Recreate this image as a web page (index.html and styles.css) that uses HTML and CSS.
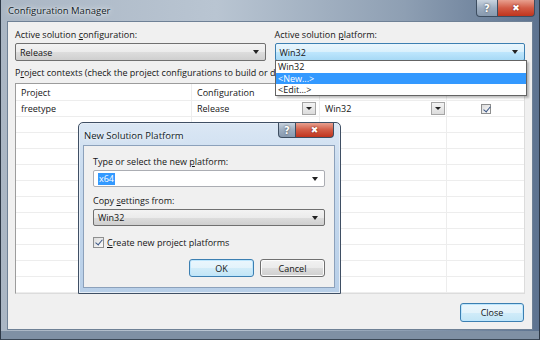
FILE: index.html
```html
<!DOCTYPE html>
<html>
<head>
<meta charset="utf-8">
<link rel="stylesheet" href="styles.css">
</head>
<body>
<div class="win">
  <div class="titlebar">
    <span class="title">Configuration Manager</span>
    <div class="capbtns">
      <span class="cap help">?</span>
      <span class="cap close">&#x2716;</span>
    </div>
  </div>
  <div class="client">
    <div class="toprow">
      <div class="field">
        <div class="lbl">Active solution <u>c</u>onfiguration:</div>
        <div class="combo gray"><span>Release</span><span class="arrow"></span></div>
      </div>
      <div class="field">
        <div class="lbl">Active solution <u>p</u>latform:</div>
        <div class="combo focus"><span>Win32</span><span class="arrow"></span></div>
      </div>
    </div>
    <div class="lbl ctx">P<u>r</u>oject contexts (check the project configurations to build or dep</div>
    <div class="grid">
      <div class="row head">
        <div class="c c1">Project</div>
        <div class="c c2">Configuration</div>
        <div class="c c3"></div>
        <div class="c c4"></div>
      </div>
      <div class="row">
        <div class="c c1">freetype</div>
        <div class="c c2"><span>Release</span><span class="dbtn"></span></div>
        <div class="c c3"><span>Win32</span><span class="dbtn"></span></div>
        <div class="c c4"><span class="chk small"></span></div>
      </div>
      <div class="row"><div class="c c1"></div><div class="c c2"></div><div class="c c3"></div><div class="c c4"></div></div>
      <div class="row"><div class="c c1"></div><div class="c c2"></div><div class="c c3"></div><div class="c c4"></div></div>
      <div class="row"><div class="c c1"></div><div class="c c2"></div><div class="c c3"></div><div class="c c4"></div></div>
      <div class="row"><div class="c c1"></div><div class="c c2"></div><div class="c c3"></div><div class="c c4"></div></div>
      <div class="row"><div class="c c1"></div><div class="c c2"></div><div class="c c3"></div><div class="c c4"></div></div>
      <div class="row"><div class="c c1"></div><div class="c c2"></div><div class="c c3"></div><div class="c c4"></div></div>
      <div class="row"><div class="c c1"></div><div class="c c2"></div><div class="c c3"></div><div class="c c4"></div></div>
      <div class="row"><div class="c c1"></div><div class="c c2"></div><div class="c c3"></div><div class="c c4"></div></div>
      <div class="row"><div class="c c1"></div><div class="c c2"></div><div class="c c3"></div><div class="c c4"></div></div>
      <div class="row"><div class="c c1"></div><div class="c c2"></div><div class="c c3"></div><div class="c c4"></div></div>
      <div class="row"><div class="c c1"></div><div class="c c2"></div><div class="c c3"></div><div class="c c4"></div></div>
    </div>
    <div class="bottom">
      <div class="btn default">Close</div>
    </div>
  </div>

  <div class="dropdown">
    <div class="item">Win32</div>
    <div class="item sel">&lt;New...&gt;</div>
    <div class="item">&lt;Edit...&gt;</div>
  </div>

  <div class="sub">
    <div class="subtitle">
      <span class="title dark">New Solution Platform</span>
      <div class="capbtns small">
        <span class="cap help">?</span>
        <span class="cap close">&#x2716;</span>
      </div>
    </div>
    <div class="subclient">
      <div class="lbl">Type or select the new <u>p</u>latform:</div>
      <div class="combo white"><span class="hl">x64</span><span class="arrow"></span></div>
      <div class="lbl gapt">Copy <u>s</u>ettings from:</div>
      <div class="combo gray"><span>Win32</span><span class="arrow"></span></div>
      <div class="check"><span class="chk"></span><span><u>C</u>reate new project platforms</span></div>
      <div class="btnrow">
        <div class="btn default">OK</div>
        <div class="btn">Cancel</div>
      </div>
    </div>
  </div>
</div>
</body>
</html>
```

FILE: styles.css
```css
* { box-sizing: border-box; }
html, body { margin: 0; padding: 0; }
body {
  width: 540px; height: 340px; overflow: hidden;
  font-family: "Open Sans", "Noto Sans", sans-serif;
  font-size: 9px; color: #151515;
  background: #f0f0f0;
}
u { text-decoration: underline; text-underline-offset: 1px; }

.win {
  position: relative;
  width: 540px; height: 340px;
  display: flex; flex-direction: column;
  padding: 0 6px 9px 6px;
  background: linear-gradient(90deg, #aab6c4 0%, #b9c5d2 40%, #8e9fb3 75%, #5d7390 100%);
  border-left: 1px solid #2d3846;
  border-right: 1px solid #2d3846;
  border-bottom: 1px solid #3a4756;
  box-shadow: inset 0 -8px 0 #7f90a4;
}
.titlebar {
  height: 21px; flex: none;
  display: flex; align-items: flex-start; justify-content: space-between;
  position: relative;
}
.title {
  font-size: 9.5px; color: #0f1a26; margin-top: 4px; margin-left: 1px;
  text-shadow: 0 0 6px rgba(255,255,255,0.9), 0 0 2px rgba(255,255,255,0.9);
}
.capbtns { display: flex; margin-right: -2px; }
.cap {
  height: 17px; display: flex; align-items: center; justify-content: center;
  color: #fff; font-size: 10px; font-weight: bold;
  border: 1px solid #3d4d60; border-top: none;
  font-family: "DejaVu Sans", sans-serif;
}
.cap.help {
  width: 22px; border-radius: 0 0 0 4px;
  background: linear-gradient(#c9d4df, #9dadc0 50%, #8799ae);
  text-shadow: 0 0 2px #333;
}
.cap.close {
  width: 37px; border-left: none; border-radius: 0 0 4px 0;
  background: linear-gradient(#e8a08f, #d25b45 50%, #c0341d);
  font-size: 9px;
  text-shadow: 0 0 2px #600;
}

.client {
  flex: 1;
  background: #f0f0f0;
  border: 1px solid #6f8196;
  padding: 6px 7px 0 7px;
  display: flex; flex-direction: column;
}
.toprow { display: flex; gap: 9px; }
.field { flex: 1; display: flex; flex-direction: column; }
.lbl { height: 14px; line-height: 14px; white-space: nowrap; }
.field .lbl { margin-bottom: 1px; }
.combo {
  height: 18px; display: flex; align-items: center; justify-content: space-between;
  padding: 0 6px 0 4px; border: 1px solid #707070; border-radius: 2px;
}
.combo.gray { background: linear-gradient(#f3f3f3 0%, #ebebeb 50%, #dddddd 51%, #cfcfcf 100%); }
.combo.focus { border-color: #3c7fb1; background: linear-gradient(#eaf6fd 0%, #d9f0fc 50%, #bee6fd 51%, #a7d9f5 100%); }
.combo.white { background: #fff; border-color: #abadb3; }
.arrow {
  width: 0; height: 0;
  border-left: 3px solid transparent; border-right: 3px solid transparent;
  border-top: 4px solid #222;
}
.hl { background: #3399ff; color: #fff; padding: 0 1px; line-height: 12px; }

.ctx { margin-top: 5px; margin-bottom: 3px; }
.grid {
  height: 211px; background: #fff; border: 1px solid #9c9c9c;
  border-right-color: #dcdcdc; border-bottom-color: #dcdcdc;
  overflow: hidden;
}
.row { display: flex; height: 16px; border-bottom: 1px solid #ededed; }
.row.head { height: 17px; }
.c { height: 100%; display: flex; align-items: center; padding-left: 5px; border-right: 1px solid #ededed; }
.c1 { width: 176px; }
.c2 { width: 128px; justify-content: space-between; padding-right: 3px; }
.c3 { width: 127px; justify-content: space-between; padding-right: 1px; }
.c4 { flex: 1; justify-content: center; border-right: none; padding-left: 0; }
.dbtn {
  width: 14px; height: 13px; border: 1px solid #a5a5a5;
  background: linear-gradient(#f4f4f4, #dcdcdc);
  display: flex; align-items: center; justify-content: center;
}
.dbtn::after {
  content: ""; border-left: 3px solid transparent; border-right: 3px solid transparent;
  border-top: 3px solid #222;
}
.chk {
  width: 11px; height: 11px; border: 1px solid #8e8f8f; background: linear-gradient(135deg, #dcdcdc, #fbfbfb);
  position: relative; display: inline-block; flex: none;
}
.chk::after {
  content: ""; position: absolute; left: 3px; top: 0px; width: 3px; height: 6px;
  border-right: 1.5px solid #3a5685; border-bottom: 1.5px solid #3a5685; transform: rotate(40deg);
}
.chk.small { width: 10px; height: 10px; }

.bottom { flex: 1; display: flex; justify-content: flex-end; align-items: flex-start; padding-top: 9px; padding-right: 1px; }
.btn {
  width: 64px; height: 19px; display: flex; align-items: center; justify-content: center;
  border: 1px solid #707070; border-radius: 3px;
  background: linear-gradient(#f2f2f2 0%, #ebebeb 50%, #dddddd 51%, #cfcfcf 100%);
  box-shadow: inset 0 0 0 1px #fcfcfc;
}
.btn.default { border-color: #3c7fb1; box-shadow: inset 0 0 0 1px #bde6fd; background: linear-gradient(#eaf6fd 0%, #e3f3fb 50%, #d1ecf9 51%, #c2e5f6 100%); }

.dropdown {
  position: absolute; left: 274px; top: 60px; width: 252px; height: 36px;
  background: #fff; border: 1px solid #646464;
  box-shadow: 2px 2px 2px rgba(0,0,0,0.25);
}
.dropdown .item { height: 11.5px; line-height: 11px; padding-left: 2px; }
.dropdown .item.sel { background: #3399ff; color: #fff; }

.sub {
  position: absolute; left: 77px; top: 122px; width: 263px; height: 172px;
  border: 1px solid #3f4f64; border-radius: 5px 5px 0 0;
  background: linear-gradient(180deg, #dbe7f4 0%, #c8dbef 30%, #b8cfe8 100%);
  padding: 0 5px 5px 4px;
  display: flex; flex-direction: column;
  box-shadow: inset 0 0 0 1px #e6eef7;
}
.subtitle { height: 22px; display: flex; justify-content: space-between; align-items: flex-start; }
.title.dark { margin-top: 6px; margin-left: 1px; font-size: 9.5px; }
.capbtns.small { margin-right: 1px; }
.capbtns.small .cap { height: 15px; }
.capbtns.small .help { width: 18px; }
.capbtns.small .close { width: 38px; }
.subclient {
  flex: 1; background: #f0f0f0; border: 1px solid #8ca1bb;
  padding: 9px 9px 0 9px;
  display: flex; flex-direction: column;
}
.subclient .lbl { margin-bottom: 1px; }
.subclient .combo { height: 17px; }
.gapt { margin-top: 7px; }
.check { display: flex; align-items: center; gap: 3px; margin-top: 9px; height: 14px; }
.btnrow { display: flex; justify-content: flex-end; gap: 6px; margin-top: 10px; }
.btnrow .btn { height: 18px; width: 65px; }
```
